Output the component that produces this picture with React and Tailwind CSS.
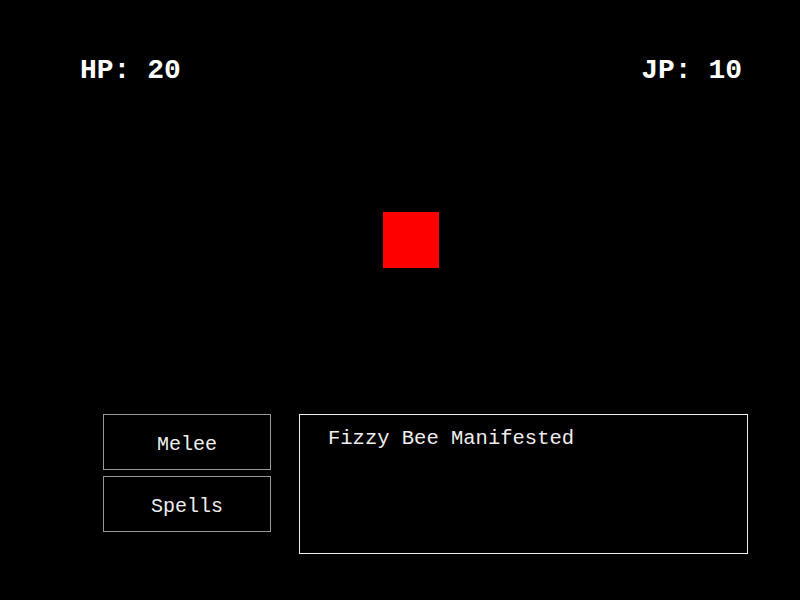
export default function App() {
  return (
    <div className="w-[800px] h-[600px] bg-black text-white font-['Courier_New','Liberation_Mono',monospace] overflow-hidden">
      <div className="flex justify-between pl-[80px] pr-[58px] pt-[56px] text-[28px] font-bold leading-[30px]">
        <span>HP: 20</span>
        <span>JP: 10</span>
      </div>
      <div className="ml-[383px] mt-[126px] w-[56px] h-[56px] bg-[#ff0000]" />
      <div className="flex gap-[28px] pl-[103px] mt-[146px]">
        <div className="flex flex-col gap-[6px]">
          <div className="w-[168px] h-[56px] border border-[#999] flex items-center justify-center pt-[6px] text-[20px] text-[#eee]">Melee</div>
          <div className="w-[168px] h-[56px] border border-[#999] flex items-center justify-center pt-[6px] text-[20px] text-[#eee]">Spells</div>
        </div>
        <div className="w-[449px] h-[140px] border border-[#eee] pl-[28px] pt-[12px] text-[20.5px] leading-[24px] text-[#eee]">
          Fizzy Bee Manifested
        </div>
      </div>
    </div>
  );
}
